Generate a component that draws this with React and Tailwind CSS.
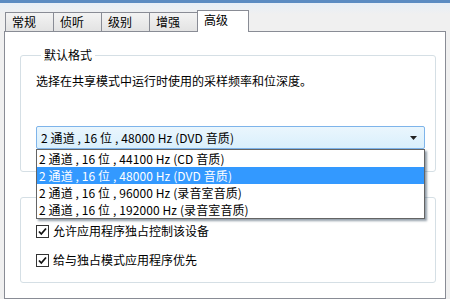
import React from "react";

const FONT = { fontFamily: '"Noto Sans CJK SC", "Noto Sans", sans-serif' };

function Tab({ label, selected }) {
  if (selected) {
    return (
      <div className="relative z-10 -mb-px flex h-[22px] w-[52px] items-start border border-b-0 border-[#898c95] bg-white pl-[6px] pt-[1px] text-[12px] leading-[16px] text-black">
        {label}
      </div>
    );
  }
  return (
    <div className="-mr-px flex h-[19px] w-[49px] items-start border border-b-0 border-[#898c95] bg-gradient-to-b from-[#f3f3f3] to-[#e3e3e3] pl-[6px] pt-[1px] text-[12px] leading-[16px] text-black">
      {label}
    </div>
  );
}

function Check({ label }) {
  return (
    <div className="flex items-center gap-[4px] text-[12px] leading-[16px] text-black">
      <svg width="13" height="13" viewBox="0 0 13 13" className="shrink-0">
        <rect x="0.5" y="0.5" width="12" height="12" fill="#fff" stroke="#333" />
        <path d="M3 6.5 L5.3 9 L10 3.5" fill="none" stroke="#111" strokeWidth="1.8" />
      </svg>
      <span>{label}</span>
    </div>
  );
}

const options = [
  "2 通道 , 16 位 , 44100 Hz (CD 音质)",
  "2 通道 , 16 位 , 48000 Hz (DVD 音质)",
  "2 通道 , 16 位 , 96000 Hz (录音室音质)",
  "2 通道 , 16 位 , 192000 Hz (录音室音质)",
];

export default function App() {
  return (
    <div className="flex h-[299px] w-[450px] flex-col overflow-hidden bg-[#f0f0f0]" style={FONT}>
      <div className="h-[3px] bg-[#5b8bc2]" />
      <div className="flex h-[28px] items-end bg-gradient-to-b from-[#e6eef7] to-[#f0f0f0] pl-[5px] to-40%">
        <Tab label="常规" />
        <Tab label="侦听" />
        <Tab label="级别" />
        <Tab label="增强" />
        <Tab label="高级" selected />
      </div>
      <div className="ml-[4px] mr-[4px] flex flex-1 flex-col border border-[#898c95] bg-white pl-[15px] pr-[9px] pt-[16px]">
        <fieldset className="relative rounded-[3px] border border-[#d5dfe5] pb-[22px] pl-[15px] pr-[10px]">
          <legend className="ml-[5px] px-[3px] text-[12px] leading-[14px] text-black">默认格式</legend>
          <div className="mt-[10px] text-[12px] leading-[17px] text-black">
            选择在共享模式中运行时使用的采样频率和位深度。
          </div>
          <div className="relative mt-[37px]">
            <div className="flex h-[23px] items-center justify-between rounded-[2px] border border-[#7eb4ea] bg-gradient-to-b from-[#eaf6fd] to-[#d9effc] pl-[4px] pr-[7px] text-[12px] tracking-[0.1px] text-black">
              <span>2 通道 , 16 位 , 48000 Hz (DVD 音质)</span>
              <svg width="7" height="4" viewBox="0 0 7 4">
                <path d="M0 0 H7 L3.5 4 Z" fill="#222" />
              </svg>
            </div>
            <div className="absolute left-0 right-0 top-[23px] z-20 border border-[#646464] bg-white shadow-[2px_2px_2px_rgba(60,80,100,0.55)]">
              {options.map((o, i) => (
                <div
                  key={o}
                  className={
                    "h-[17px] pl-[2px] text-[12px] leading-[17px] tracking-[0.1px] " +
                    (i === 1 ? "bg-[#3399ff] text-white" : "text-black")
                  }
                >
                  {o}
                </div>
              ))}
            </div>
          </div>
        </fieldset>
        <fieldset className="mt-[18px] flex flex-col gap-[13px] rounded-[3px] border border-[#d5dfe5] pb-[14px] pl-[15px] pt-[19px]">
          <legend className="ml-[5px] px-[3px] text-[12px] leading-[14px] text-black">独占模式</legend>
          <Check label="允许应用程序独占控制该设备" />
          <Check label="给与独占模式应用程序优先" />
        </fieldset>
      </div>
    </div>
  );
}
